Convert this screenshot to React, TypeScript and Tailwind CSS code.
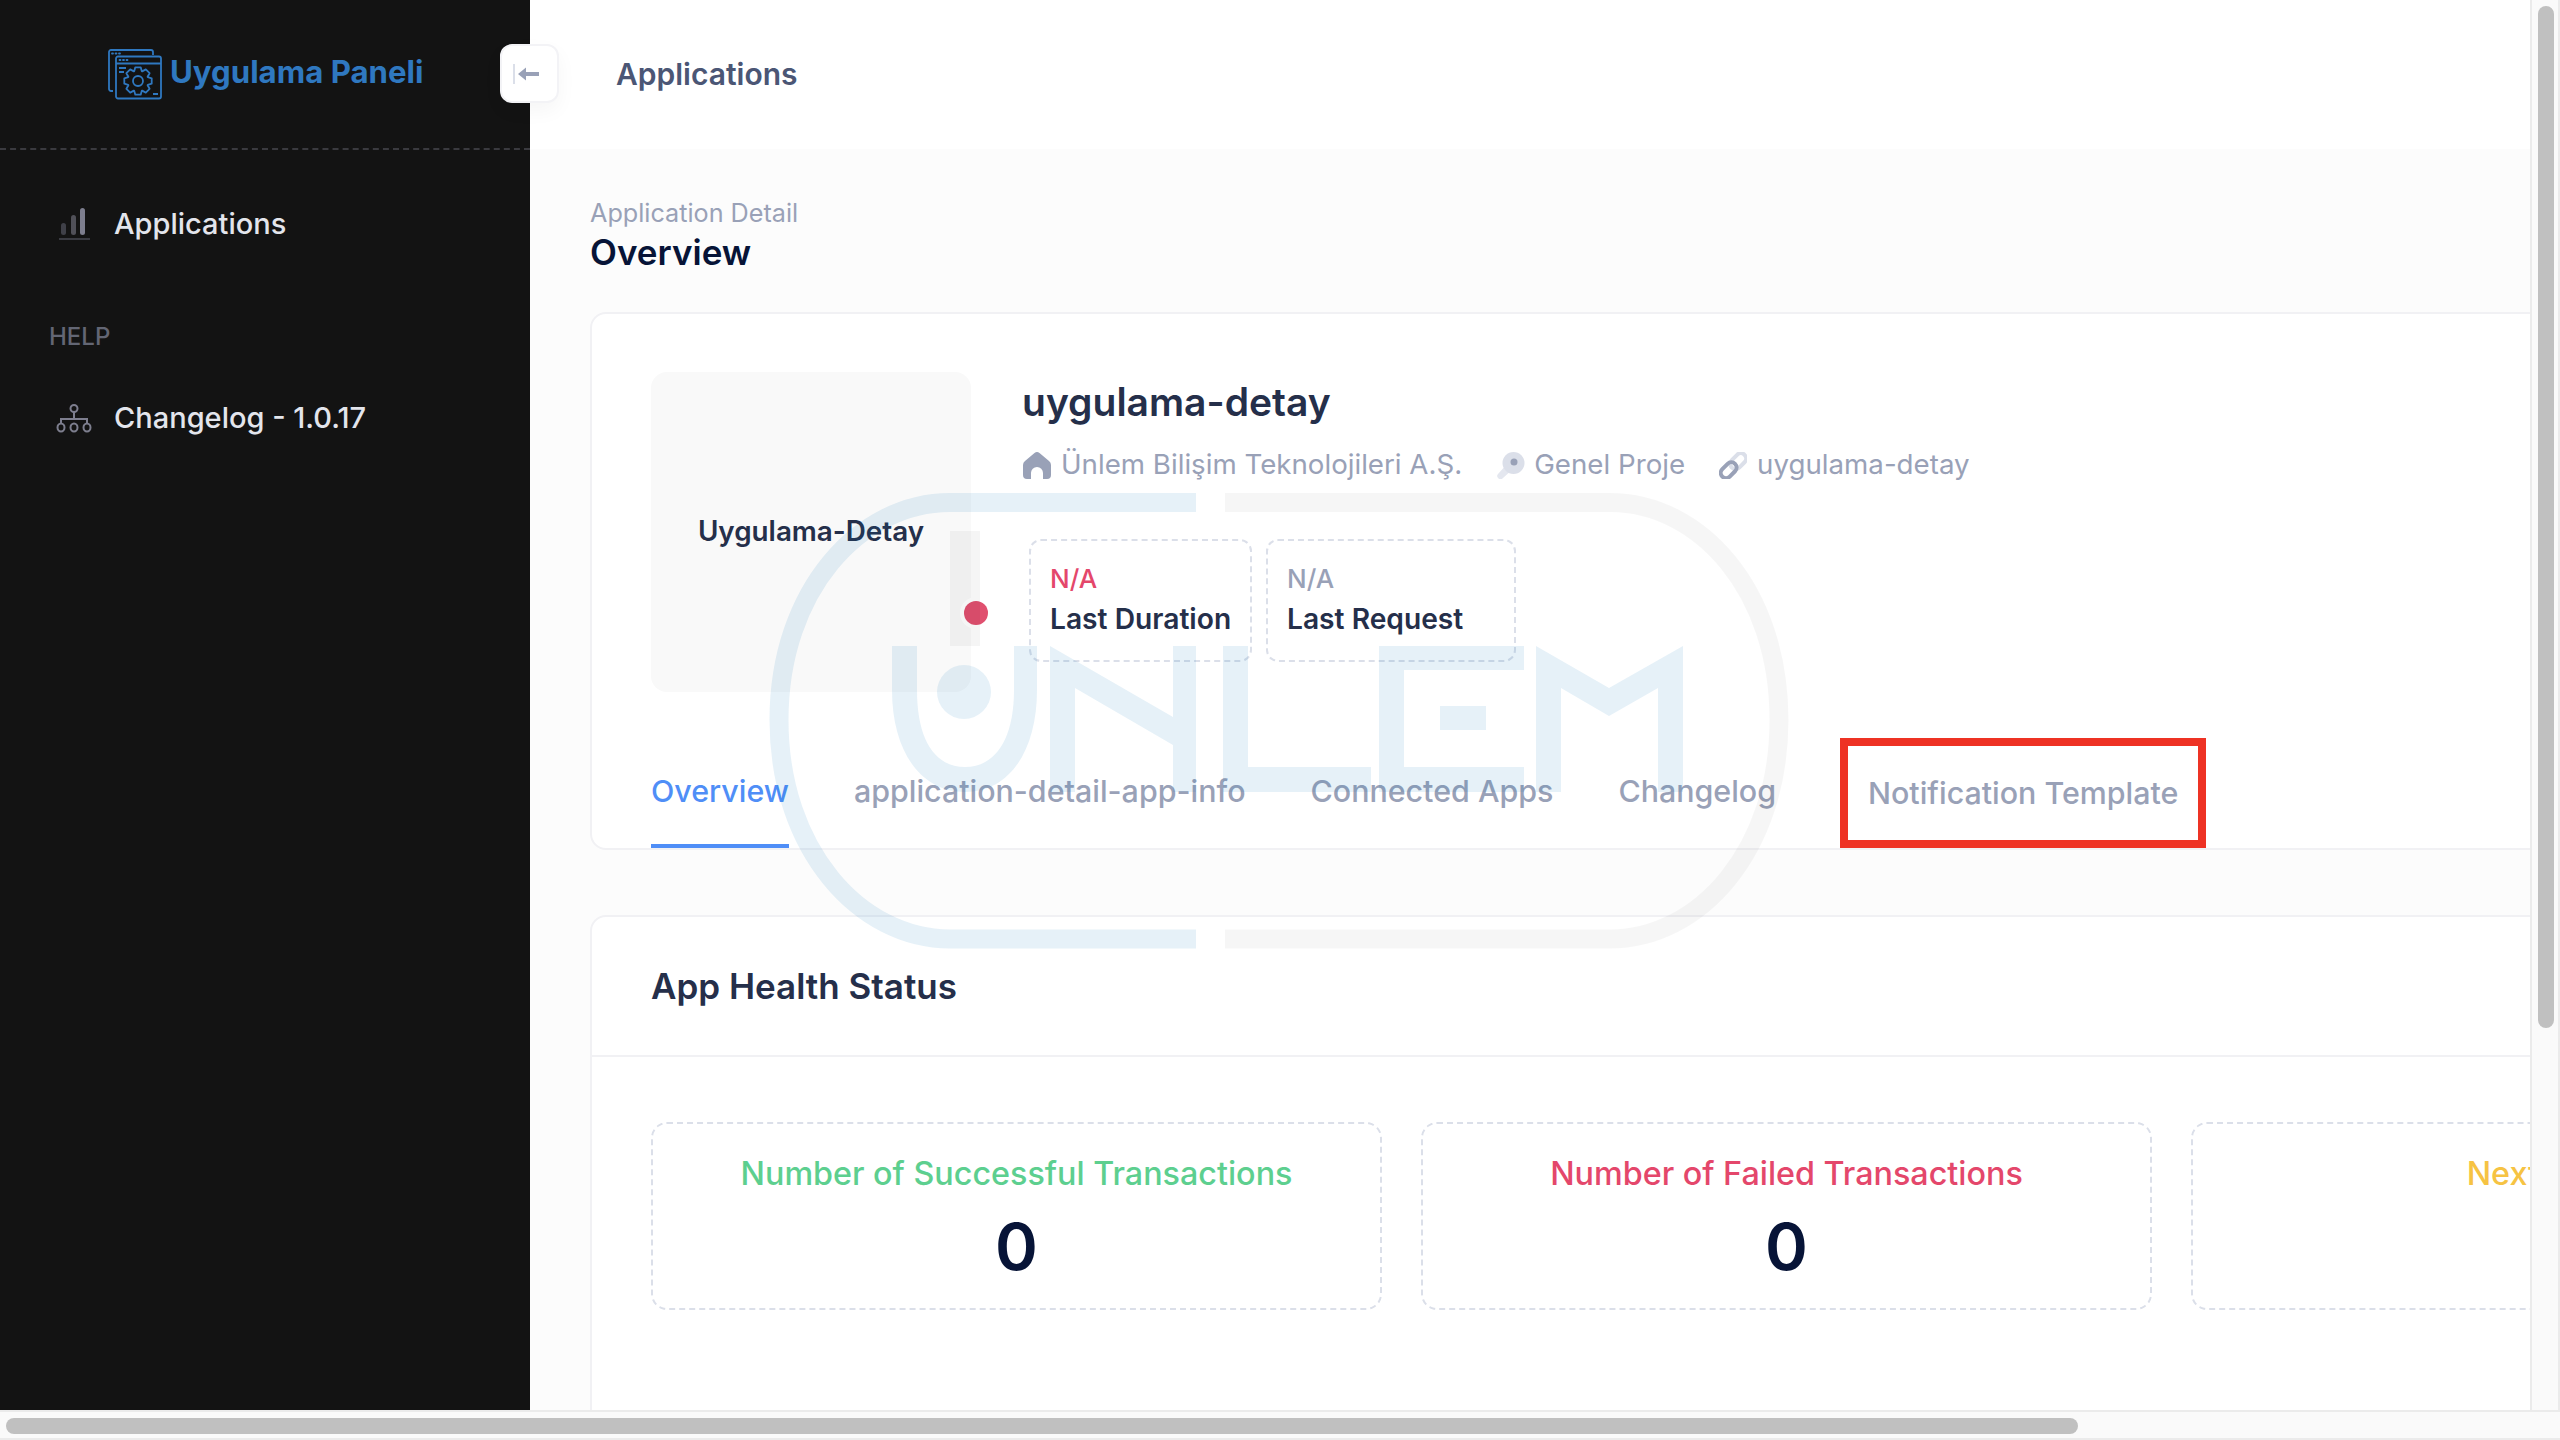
import React from "react";

const font = "font-['Inter','Liberation_Sans',sans-serif]";

/* ------------------------------------------------------------------ */
/*  Icons                                                             */
/* ------------------------------------------------------------------ */

// Outline of a gear with 8 teeth
function gearPath(cx: number, cy: number, outer: number, inner: number) {
  const pts: string[] = [];
  for (let i = 0; i < 8; i++) {
    const a = (i * Math.PI) / 4;
    const step = Math.PI / 8;
    [
      [a - step * 0.95, inner],
      [a - step * 0.5, outer],
      [a + step * 0.5, outer],
      [a + step * 0.95, inner],
    ].forEach(([t, r]) => {
      pts.push(`${(cx + r * Math.cos(t)).toFixed(1)} ${(cy + r * Math.sin(t)).toFixed(1)}`);
    });
  }
  return `M${pts.join("L")}Z`;
}

function LogoIcon() {
  return (
    <svg width="54" height="51" viewBox="0 0 54 51" fill="none" stroke="#2f78c0" strokeWidth="1.8">
      <path d="M5 42H3a2 2 0 0 1-2-2V3a2 2 0 0 1 2-2h40a2 2 0 0 1 2 2v3" />
      <rect x="8" y="7.500" width="45" height="42" rx="2" />
      <path d="M8 14.500h45M11 19h7M11 23h5M45 45h5" />
      <path d="M4 4.500h1M7.500 4.500h1M11 4.500h1M11.500 11h1M15 11h1M18.500 11h1" strokeLinecap="round" />
      <circle cx="30" cy="32" r="5" />
      <path d={gearPath(30, 32, 14, 10.500)} strokeLinejoin="round" />
    </svg>
  );
}

function BarsIcon() {
  return (
    <svg width="32" height="32" viewBox="0 0 32 32">
      <rect x="2" y="15" width="5" height="12" rx="2.500" fill="#3f4048" />
      <rect x="12" y="7" width="5" height="20" rx="2.500" fill="#505058" />
      <rect x="21" y="0" width="5" height="27" rx="2.500" fill="#7d7e8e" />
      <rect x="0" y="30" width="31" height="2" fill="#3a3b42" />
    </svg>
  );
}

function TreeIcon() {
  return (
    <svg width="36" height="29" viewBox="0 0 36 29" fill="none" stroke="#7d7e8e" strokeWidth="2">
      <circle cx="18" cy="4.500" r="3.500" />
      <path d="M18 8v7M5 19v-4h26v4" />
      <ellipse cx="5" cy="23.500" rx="3.500" ry="4" />
      <ellipse cx="18" cy="23.500" rx="3.500" ry="4" />
      <ellipse cx="31" cy="23.500" rx="3.500" ry="4" />
    </svg>
  );
}

function HomeIcon() {
  return (
    <svg width="28" height="27" viewBox="0 0 28 27" fill="#99a1b7">
      <path d="M11.500 1a4 4 0 0 1 5 0L26 9a5 5 0 0 1 2 4V23a4 4 0 0 1-4 4H20V21a6 6 0 0 0-12 0V27H4a4 4 0 0 1-4-4V13a5 5 0 0 1 2-4Z" />
    </svg>
  );
}

function KeyIcon() {
  return (
    <svg width="28" height="27" viewBox="0 0 28 27">
      <path d="M1 22l9-10 6 5-10 9a3 3 0 0 1-5-4z" fill="#e4e7ef" />
      <circle cx="16.500" cy="11" r="11" fill="#dbdfe9" />
      <circle cx="17" cy="10" r="3.500" fill="#99a1b7" />
    </svg>
  );
}

function LinkIcon() {
  return (
    <svg width="28" height="27" viewBox="0 0 28 27" fill="none" strokeWidth="4">
      <rect x="10" y="4" width="18" height="10.500" rx="5.250" stroke="#dbdfe9" transform="rotate(-45 19 9)" />
      <rect x="0.500" y="13" width="18" height="10.500" rx="5.250" stroke="#99a1b7" transform="rotate(-45 9.500 18)" />
    </svg>
  );
}

// Watermark drawn in page coordinates, it lies over the whole content
function Watermark() {
  const blue = "#0a7ab8";
  const gray = "#000000";
  return (
    <svg
      className="absolute left-0 top-0 pointer-events-none"
      width="2530"
      height="1410"
      viewBox="0 0 2530 1410"
    >
      <g fill="none" stroke={blue} strokeOpacity="0.1" strokeWidth="19">
        <path d="M1196 502.500H950C860 502.500 779 590 779 720S860 939 950 939H1196" />
      </g>
      <g fill="none" stroke={gray} strokeOpacity="0.035" strokeWidth="19">
        <path d="M1225 502.500H1610C1700 502.500 1779 590 1779 720S1700 939 1610 939H1225" />
      </g>
      <rect x="950" y="531" width="30" height="115" fill={gray} fillOpacity="0.04" />
      <g fill={blue} fillOpacity="0.1">
        <path d="M892 646H917V690C917 740 935 767 965 767S1014 740 1014 690V646H1037V690C1037 750 1010 792 965 792S892 750 892 690Z" />
        <ellipse cx="964" cy="692" rx="27" ry="27" />
        <path d="M1050 646L1173 717V646H1196V792H1173V745L1075 688V792H1050Z" />
        <path d="M1223 646H1248V767H1371V792H1223Z" />
        <path d="M1379 646H1524V670H1404V767H1524V792H1379Z" />
        <rect x="1440" y="706" width="46" height="24" />
        <path d="M1536 646L1609 688L1683 646V792H1658V688L1609 716L1561 688V792H1536Z" />
      </g>
    </svg>
  );
}

/* ------------------------------------------------------------------ */
/*  Small pieces                                                      */
/* ------------------------------------------------------------------ */

function StatBox({ value, label, valueClass, width }: { value: string; label: string; valueClass: string; width: string }) {
  return (
    <div className={`${width} h-[123px] rounded-xl border-2 border-dashed border-[#dbdfe9] pl-[19px] pt-[22px]`}>
      <div className={`text-[26px] leading-[32px] font-medium ${valueClass}`}>{value}</div>
      <div className="mt-[6px] text-[28.200px] leading-[36px] font-semibold text-[#252f4a] whitespace-nowrap">{label}</div>
    </div>
  );
}

function HealthCard({ label, color }: { label: string; color: string }) {
  return (
    <div className="w-[731px] h-[188px] shrink-0 rounded-2xl border-2 border-dashed border-[#dbdfe9] flex flex-col items-center pt-[30px]">
      <div className={`text-[32.300px] leading-[40px] font-medium whitespace-nowrap ${color}`}>{label}</div>
      <div className="mt-[17px] text-[65px] leading-[72px] font-semibold text-[#071437]">0</div>
    </div>
  );
}

/* ------------------------------------------------------------------ */
/*  Page                                                              */
/* ------------------------------------------------------------------ */

export default function App() {
  return (
    <div className={`${font} relative w-[2560px] h-[1440px] overflow-hidden flex flex-col bg-[#fafafa]`}>
      <div className="flex h-[1410px]">
        {/* Sidebar */}
        <aside className="w-[530px] shrink-0 bg-[#131313] flex flex-col">
          <div className="h-[150px] shrink-0 border-b-2 border-dashed border-[#3a3a3f] flex items-start pl-[108px] pt-[49px] gap-[8px]">
            <LogoIcon />
            <span className="text-[31.200px] leading-[46px] font-bold text-[#2f78c0] whitespace-nowrap">Uygulama Paneli</span>
          </div>
          <div className="flex items-center mt-[56px] pl-[59px] gap-[23px] h-[36px]">
            <BarsIcon />
            <span className="text-[29px] font-medium text-[#e3e5ec]">Applications</span>
          </div>
          <div className="mt-[79px] pl-[49px] text-[24px] leading-[32px] font-medium text-[#636674]">HELP</div>
          <div className="flex items-center mt-[47px] pl-[56px] gap-[22px] h-[36px]">
            <TreeIcon />
            <span className="text-[29px] font-medium text-[#e3e5ec]">Changelog - 1.0.17</span>
          </div>
        </aside>

        {/* Main */}
        <main className="w-[2000px] shrink-0 overflow-hidden bg-[#fcfcfc]">
          <header className="h-[149px] bg-white flex items-center pl-[86px]">
            <span className="text-[30px] font-semibold text-[#4b5675]">Applications</span>
          </header>
          <div className="pl-[60px] w-[2460px]">
            <div className="mt-[48px] text-[25.200px] leading-[32px] text-[#99a1b7]">Application Detail</div>
            <div className="mt-[1px] text-[35px] leading-[44px] font-semibold text-[#071437]">Overview</div>

            {/* Detail card */}
            <div className="mt-[38px] h-[538px] rounded-2xl border-2 border-[#f1f1f4] bg-white pl-[59px] pt-[58px] flex flex-col">
              <div className="flex">
                <div className="relative w-[320px] h-[320px] rounded-2xl bg-[#f9f9f9] flex items-center justify-center">
                  <span className="text-[27.800px] font-semibold text-[#252f4a]">Uygulama-Detay</span>
                  {/* status dot */}
                  <span className="absolute left-[313px] top-[229px] w-[24px] h-[24px] rounded-full bg-[#e0506f] ring-4 ring-white" />
                </div>
                <div className="ml-[51px]">
                  <div className="text-[39px] leading-[48px] font-semibold text-[#252f4a] pt-[6px]">uygulama-detay</div>
                  <div className="flex items-center mt-[21px] h-[36px] pl-[1px] text-[27.700px] text-[#99a1b7]">
                    <HomeIcon />
                    <span className="ml-[10px]">Ünlem Bilişim Teknolojileri A.Ş.</span>
                    <span className="ml-[35px]"><KeyIcon /></span>
                    <span className="ml-[9px]">Genel Proje</span>
                    <span className="ml-[34px]"><LinkIcon /></span>
                    <span className="ml-[10px]">uygulama-detay</span>
                  </div>
                  <div className="flex gap-[14px] mt-[56px] ml-[7px]">
                    <StatBox value="N/A" label="Last Duration" valueClass="text-[#e4476b]" width="w-[223px]" />
                    <StatBox value="N/A" label="Last Request" valueClass="text-[#99a1b7]" width="w-[250px]" />
                  </div>
                </div>
              </div>

              {/* Tabs */}
              <div className="mt-[auto] flex items-start text-[30.400px] font-medium text-[#99a1b7] h-[104px] whitespace-nowrap">
                <div className="h-full pt-[25px] border-b-4 border-[#4f8ef7] text-[#4f8ef7]">Overview</div>
                <div className="ml-[65px] pt-[25px]">application-detail-app-info</div>
                <div className="ml-[65px] pt-[25px]">Connected Apps</div>
                <div className="ml-[65px] pt-[25px]">Changelog</div>
                <div className="ml-[92px] relative">
                  <div className="absolute -left-[28px] -top-[6px] w-[366px] h-[110px] border-[8px] border-[#ee3224]" />
                  <div className="pt-[27px]">Notification Template</div>
                </div>
              </div>
            </div>

            {/* Health card */}
            <div className="mt-[65px] h-[600px] rounded-2xl border-2 border-[#f1f1f4] bg-white">
              <div className="h-[140px] border-b-2 border-[#f1f1f4] flex items-center pl-[59px]">
                <span className="text-[35px] font-semibold text-[#252f4a]">App Health Status</span>
              </div>
              <div className="flex gap-[39px] pl-[59px] pt-[65px]">
                <HealthCard label="Number of Successful Transactions" color="text-[#5dcf8f]" />
                <HealthCard label="Number of Failed Transactions" color="text-[#e4476b]" />
                <HealthCard label="Next Check" color="text-[#f6c343]" />
              </div>
            </div>
          </div>
        </main>

        {/* Vertical scrollbar */}
        <div className="w-[30px] shrink-0 bg-[#fafafa] border-l-2 border-r-2 border-[#ebebeb] pl-[6px] pt-[6px]">
          <div className="w-[16px] h-[1022px] rounded-full bg-[#c0c0c0]" />
        </div>
      </div>

      {/* Horizontal scrollbar */}
      <div className="h-[30px] bg-[#fafafa] border-t-2 border-b-2 border-[#ebebeb] pl-[6px] pt-[6px]">
        <div className="w-[2072px] h-[16px] rounded-full bg-[#c0c0c0]" />
      </div>

      {/* Sidebar toggle lies over the border of the sidebar */}
      <button className="absolute left-[500px] top-[44px] w-[59px] h-[59px] rounded-xl bg-white border-2 border-[#f3f3f6] shadow-[0_8px_20px_rgba(0,0,0,0.04)] flex items-center justify-start pl-[11px]">
        <svg width="27" height="22" viewBox="0 0 27 22" fill="none">
          <path d="M1 1v20" stroke="#dbdfe9" strokeWidth="2" />
          <path d="M5 11l8-6.500v4.500h13v4H13v4.500z" fill="#99a1b7" />
        </svg>
      </button>

      <Watermark />
    </div>
  );
}
